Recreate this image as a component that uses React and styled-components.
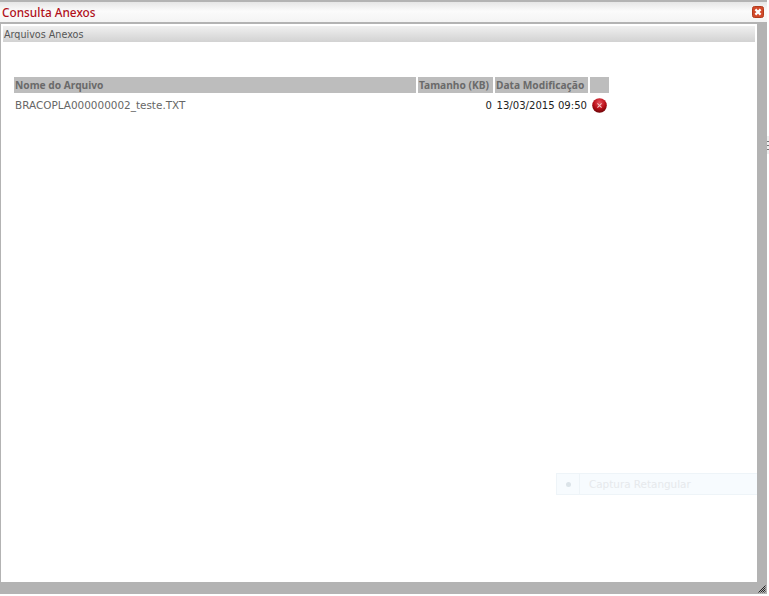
import React from 'react';
import styled, { createGlobalStyle } from 'styled-components';

const GlobalStyle = createGlobalStyle`
  html, body {
    margin: 0;
    padding: 0;
    background: #fff;
    overflow: hidden;
  }
  body {
    font-family: "DejaVu Sans", "Liberation Sans", sans-serif;
  }
`;

function CloseIcon() {
  return (
    <svg width="12" height="12" viewBox="0 0 12 12">
      <rect x="0.5" y="0.5" width="11" height="11" rx="2" fill="#d2492a" stroke="#b03c1e" />
      <path d="M3.4 3.4 L8.6 8.6 M8.6 3.4 L3.4 8.6" stroke="#fff" strokeWidth="2.2" />
    </svg>
  );
}

function DeleteIcon() {
  return (
    <svg width="15" height="15" viewBox="0 0 16 16">
      <defs>
        <radialGradient id="ball" cx="50%" cy="30%" r="75%">
          <stop offset="0%" stopColor="#e8505a" />
          <stop offset="55%" stopColor="#b80f18" />
          <stop offset="100%" stopColor="#5e0406" />
        </radialGradient>
      </defs>
      <circle cx="8" cy="8" r="7.8" fill="url(#ball)" />
      <path d="M5.8 5.8 L10.2 10.2 M10.2 5.8 L5.8 10.2" stroke="#f6c8c8" strokeWidth="1.1" />
    </svg>
  );
}

function ResizeGrip() {
  return (
    <svg width="8" height="8" viewBox="0 0 8 8">
      <path d="M7.5 0.5 L0.5 7.5 M7.5 2.5 L2.5 7.5 M7.5 4.5 L4.5 7.5 M7.5 6.5 L6.5 7.5" stroke="#222" strokeWidth="1" />
    </svg>
  );
}

export default function App() {
  return (
    <>
      <GlobalStyle />
      <Page>
        <Dialog>
          <TitleBar>
            <Title>Consulta Anexos</Title>
            <CloseIcon />
          </TitleBar>
          <Body>
            <SectionBar>Arquivos Anexos</SectionBar>
            <FilesTable>
              <thead>
                <tr>
                  <HeadCell $width={402}>Nome do Arquivo</HeadCell>
                  <HeadCell $width={75}>Tamanho (KB)</HeadCell>
                  <HeadCell $width={93}>Data Modificação</HeadCell>
                  <HeadCell $width={19} />
                </tr>
              </thead>
              <tbody>
                <tr>
                  <NameCell>BRACOPLA000000002_teste.TXT</NameCell>
                  <ValueCell>0</ValueCell>
                  <ValueCell>13/03/2015 09:50</ValueCell>
                  <IconCell><DeleteIcon /></IconCell>
                </tr>
              </tbody>
            </FilesTable>
          </Body>
          <BottomBar>
            <ResizeGrip />
          </BottomBar>
        </Dialog>
        <EdgeMarks>
          <EdgeMark />
          <EdgeMark />
          <EdgeMark />
        </EdgeMarks>
        <Ghost>
          <GhostIcon><GhostDot /></GhostIcon>
          <GhostLabel>Captura Retangular</GhostLabel>
        </Ghost>
      </Page>
    </>
  );
}

const Page = styled.div`
  position: relative;
  width: 769px;
  height: 596px;
  overflow: hidden;
  background: #fff;
`;

const Dialog = styled.div`
  width: 767px;
  height: 594px;
  box-sizing: border-box;
  display: flex;
  flex-direction: column;
  background: #b3b3b3;
  padding-top: 2px;
`;

const TitleBar = styled.div`
  height: 20px;
  flex: none;
  display: flex;
  align-items: center;
  justify-content: space-between;
  padding: 0 3px 0 2px;
  background: linear-gradient(#e6e6e6, #fbfbfb 45%, #f4f4f4);
`;

const Title = styled.div`
  color: #b0101a;
  font-family: "Noto Sans", sans-serif;
  font-size: 11.8px;
  font-weight: 500;
  line-height: 20px;
  margin-top: -1px;
`;

const Body = styled.div`
  flex: 1;
  margin: 2px 10px 0 1px;
  padding: 2px 2px 0 2px;
  background: #fff;
`;

const SectionBar = styled.div`
  height: 16px;
  line-height: 17px;
  padding-left: 1px;
  font-size: 9.6px;
  color: #555;
  background: linear-gradient(#f0f0f0, #d2d2d2);
`;

const FilesTable = styled.table`
  width: 599px;
  margin: 35px 0 0 9px;
  border-collapse: separate;
  border-spacing: 2px 0;
  table-layout: fixed;
`;

const HeadCell = styled.th`
  width: ${(props) => props.$width}px;
  height: 16px;
  padding: 0 0 1px 1px;
  box-sizing: border-box;
  background: #bdbdbd;
  color: #6a6a6a;
  font-family: "Noto Sans", sans-serif;
  font-size: 10.2px;
  font-weight: 700;
  text-align: left;
  white-space: nowrap;
  overflow: hidden;
`;

const NameCell = styled.td`
  height: 24px;
  padding: 0 0 0 1px;
  font-size: 10.45px;
  color: #666;
  white-space: nowrap;
`;

const ValueCell = styled.td`
  padding: 0 1px 0 0;
  font-size: 10.1px;
  color: #222;
  text-align: right;
  white-space: nowrap;
`;

const IconCell = styled.td`
  padding: 0 0 0 2px;
  line-height: 0;
`;

const BottomBar = styled.div`
  height: 11px;
  flex: none;
  display: flex;
  justify-content: flex-end;
  align-items: flex-end;
  padding: 0 1px 1px 0;
`;

const EdgeMarks = styled.div`
  position: absolute;
  left: 767px;
  top: 136px;
  width: 2px;
  height: 18px;
  display: flex;
  flex-direction: column;
  justify-content: center;
  gap: 3px;
  background: #efefef;
`;

const EdgeMark = styled.span`
  height: 1px;
  background: #777;
`;

const Ghost = styled.div`
  position: absolute;
  left: 556px;
  top: 473px;
  width: 201px;
  height: 22px;
  display: flex;
  align-items: center;
  background: #f7fbfe;
  border: 1px solid #eef4f8;
  border-right: none;
  box-sizing: border-box;
`;

const GhostIcon = styled.div`
  width: 22px;
  height: 100%;
  display: flex;
  align-items: center;
  justify-content: center;
  border-right: 1px solid #eef4f8;
`;

const GhostDot = styled.span`
  width: 5px;
  height: 5px;
  border-radius: 50%;
  background: #dbe3e8;
`;

const GhostLabel = styled.span`
  margin-left: 9px;
  font-size: 10.4px;
  color: #e6e9ec;
`;
